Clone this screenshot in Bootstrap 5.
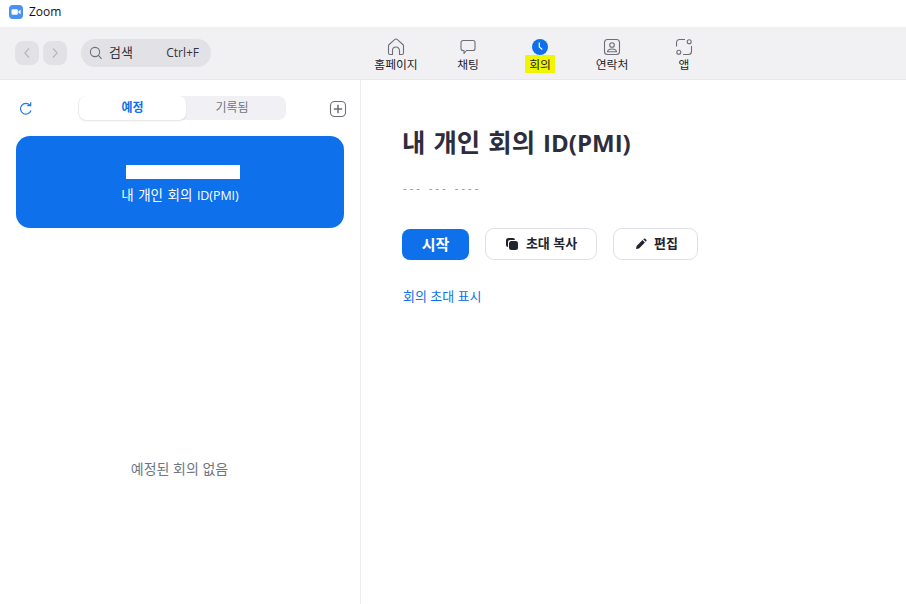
<!DOCTYPE html>
<html lang="ko">
<head>
<meta charset="utf-8">
<title>Zoom</title>
<link href="https://cdn.jsdelivr.net/npm/bootstrap@5.3.0/dist/css/bootstrap.min.css" rel="stylesheet">
<style>
html,body{height:100%;overflow:hidden}
body{font-family:"Open Sans","Noto Sans CJK KR",sans-serif;background:#fff;color:#23232f}
.win-shell{height:604px}
.title-strip{height:27px;padding:0 0 4px 9px;font-size:12px;gap:6px;color:#111}
.tool-strip{height:53px;background:#f1f1f4;border-bottom:1px solid #e8e8ec}
.left-tools{width:360px;padding-left:15px;gap:4px}
.arrow-btn{width:24px;height:24px;border-radius:8px;background:#e1e1e6}
.search-box{width:130px;height:28px;border-radius:14px;background:#e1e1e6;margin-left:10px;padding:0 12px 0 8px;font-size:12px;color:#33333f}
.search-word{margin-left:6px;margin-right:auto;font-size:13px}
.nav-cell{width:72px;height:53px;padding-top:11px;font-size:11.8px;line-height:14px;color:#1c1c28;text-align:center}
.nav-cell svg{display:block;margin:0 auto 1px}
.nav-hl{background:#f0f500;padding:1px 4.5px}
.side-pane{width:361px;border-right:1px solid #ececf0;padding:16px 16px 0}
.side-top{height:24px;margin-bottom:16px}
.refresh-ico{margin:2px 0 0 2px}
.plus-ico{margin:1px -3px 0 auto}
.seg-wrap{width:208px;height:24px;background:#f1f1f5;border-radius:8px;font-size:12px;margin-left:44px}
.seg-on{width:107px;margin-left:1px;background:#fff;border-radius:7px;color:#0e71eb;font-weight:700;box-shadow:0 1px 2px rgba(30,30,60,.13)}
.seg-off{flex:1;color:#6e7680;padding-right:8px}
.pmi-tile{height:92px;width:328px;background:#0e71eb;border-radius:14px;color:#fff;font-size:13.5px;padding-top:29px;word-spacing:1px}
.white-mask{width:114px;height:14px;background:#fff;margin:0 0 6px 6px}
.tile-latin{font-size:12.4px}
.no-meet{margin-top:230px;padding-right:1px;font-size:14px;color:#6e7680;text-align:center}
.main-pane{padding:45px 0 0 41px}
.big-title{font-size:25.4px;font-weight:700;line-height:34px;color:#2d2d3c;margin:0;word-spacing:1.5px}
.title-latin{font-size:24px}
.dash-row{font-size:11px;letter-spacing:3.1px;color:#8b8b95;line-height:16px;margin-top:20px;margin-bottom:32px;padding-left:1px}
.act-row{gap:16px}
.act-start{width:67px;height:31px;background:#0e71eb;color:#fff;font-size:15px;font-weight:700;border:0;border-radius:8px;padding:0;margin-top:1px}
.act-out{height:32px;background:#fff;border:1px solid #dfe1e8;border-radius:9px;font-size:13px;font-weight:700;color:#23232f;padding:0;gap:7px}
.w-copy{width:112px}.w-edit{width:85px;padding-left:2px}
.invite-link{display:block;font-size:13px;color:#0e71eb;text-decoration:none;margin:27px 0 0 1px;line-height:18px}
</style>
</head>
<body>
<div class="win-shell d-flex flex-column">
  <div class="title-strip d-flex align-items-center">
    <svg width="14" height="14" viewBox="0 0 14 14"><rect width="14" height="14" rx="4" fill="#4a90f5"/><rect x="2.5" y="4.2" width="6.3" height="5.6" rx="1.2" fill="#fff"/><path d="M9.3 6.4l2.3-1.6v4.4L9.3 7.6z" fill="#fff"/></svg>
    <span>Zoom</span>
  </div>
  <div class="tool-strip d-flex">
    <div class="left-tools d-flex align-items-center">
      <div class="arrow-btn d-flex align-items-center justify-content-center"><svg width="8" height="12" viewBox="0 0 8 12" fill="none" stroke="#b5b5bd" stroke-width="1.1"><path d="M6 1.5L1.8 6 6 10.5"/></svg></div>
      <div class="arrow-btn d-flex align-items-center justify-content-center"><svg width="8" height="12" viewBox="0 0 8 12" fill="none" stroke="#b5b5bd" stroke-width="1.1"><path d="M2 1.5L6.2 6 2 10.5"/></svg></div>
      <div class="search-box d-flex align-items-center">
        <svg width="14" height="14" viewBox="0 0 14 14" fill="none" stroke="#6e6e78" stroke-width="1.1"><circle cx="6" cy="6" r="4.6"/><path d="M9.4 9.4L12.6 12.8"/></svg>
        <span class="search-word">검색</span><span>Ctrl+F</span>
      </div>
    </div>
    <div class="nav-cell">
      <svg width="18" height="18" viewBox="0 0 18 18" fill="none" stroke="#6e6e78" stroke-width="1.1"><path d="M1.5 15V8a2 2 0 0 1 .7-1.500L7.600 1.700a2 2 0 0 1 2.800 0l5.400 4.800a2 2 0 0 1 .7 1.500v7a1.500 1.500 0 0 1-1.500 1.500h-2.500v-4a3.500 3.500 0 0 0-7 0v4H3a1.500 1.500 0 0 1-1.500-1.500z" stroke-linejoin="round"/></svg>
      홈페이지
    </div>
    <div class="nav-cell">
      <svg width="18" height="18" viewBox="0 0 18 18" fill="none" stroke="#6e6e78" stroke-width="1.1"><path d="M4 2.500h10a2 2 0 0 1 2 2v6a2 2 0 0 1-2 2H7.500L5 15.500v-3H4a2 2 0 0 1-2-2v-6a2 2 0 0 1 2-2z" stroke-linejoin="round"/></svg>
      채팅
    </div>
    <div class="nav-cell">
      <svg width="18" height="18" viewBox="0 0 18 18"><circle cx="9" cy="9" r="8" fill="#0e71eb"/><path d="M8.300 4.500V9l3 2.500" fill="none" stroke="#fff" stroke-width="1.200"/></svg>
      <span class="nav-hl">회의</span>
    </div>
    <div class="nav-cell">
      <svg width="18" height="18" viewBox="0 0 18 18" fill="none" stroke="#6e6e78" stroke-width="1.1"><rect x="1.500" y="1.500" width="15" height="15" rx="3"/><circle cx="9" cy="7" r="2.300"/><path d="M4.500 13.800c.3-2 2-2.800 4.500-2.800s4.200.8 4.500 2.800z"/></svg>
      연락처
    </div>
    <div class="nav-cell">
      <svg width="18" height="18" viewBox="0 0 18 18" fill="none" stroke="#6e6e78" stroke-width="1.1"><path d="M1.500 8.500V4.500a3 3 0 0 1 3-3H10M16.500 8v5.500a3 3 0 0 1-3 3H8"/><circle cx="14.200" cy="3.800" r="2"/><circle cx="3.800" cy="14.200" r="2"/></svg>
      앱
    </div>
  </div>
  <div class="d-flex flex-grow-1">
    <div class="side-pane">
      <div class="side-top d-flex align-items-center">
        <svg width="16" height="16" viewBox="0 0 16 16" fill="none" stroke="#1f7bec" stroke-width="1.200" class="refresh-ico"><path d="M13 9.500A5.400 5.400 0 1 1 12 4.200"/><path d="M12.700 1.300v3.400H9.300"/></svg>
        <div class="seg-wrap d-flex">
          <div class="seg-on d-flex align-items-center justify-content-center">예정</div>
          <div class="seg-off d-flex align-items-center justify-content-center">기록됨</div>
        </div>
        <svg width="18" height="18" viewBox="0 0 18 18" fill="none" stroke="#6e6e78" stroke-width="1.100" class="plus-ico"><rect x="1.500" y="1.500" width="15" height="15" rx="4"/><path d="M9 4.800v8.400M4.800 9h8.400" stroke-width="1.500"/></svg>
      </div>
      <div class="pmi-tile d-flex flex-column align-items-center">
        <div class="white-mask"></div>
        <div>내 개인 회의 <span class="tile-latin">ID(PMI)</span></div>
      </div>
      <div class="no-meet">예정된 회의 없음</div>
    </div>
    <div class="main-pane flex-grow-1">
      <h1 class="big-title">내 개인 회의 <span class="title-latin">ID(PMI)</span></h1>
      <div class="dash-row">--- --- ----</div>
      <div class="act-row d-flex align-items-start">
        <button class="act-start btn">시작</button>
        <button class="act-out w-copy btn d-flex align-items-center justify-content-center">
          <svg width="14" height="14" viewBox="0 0 14 14"><path d="M1 3.500A2.500 2.500 0 0 1 3.500 1H8a2 2 0 0 1 2 2H5a2 2 0 0 0-2 2v5a2 2 0 0 1-2-2z" fill="#23232f"/><rect x="4" y="4" width="9" height="9" rx="2.500" fill="#23232f"/></svg>
          초대 복사
        </button>
        <button class="act-out w-edit btn d-flex align-items-center justify-content-center">
          <svg width="12" height="12" viewBox="0 0 12 12"><path d="M1 11l.6-3L7.500 2.100l2.400 2.400L4 10.400zM8.300 1.300l.6-.5a1 1 0 0 1 1.400 0l1 1a1 1 0 0 1 0 1.400l-.6.500z" fill="#23232f"/></svg>
          편집
        </button>
      </div>
      <a class="invite-link" href="#">회의 초대 표시</a>
    </div>
  </div>
</div>
<script src="https://cdn.jsdelivr.net/npm/bootstrap@5.3.0/dist/js/bootstrap.bundle.min.js"></script>
</body>
</html>
